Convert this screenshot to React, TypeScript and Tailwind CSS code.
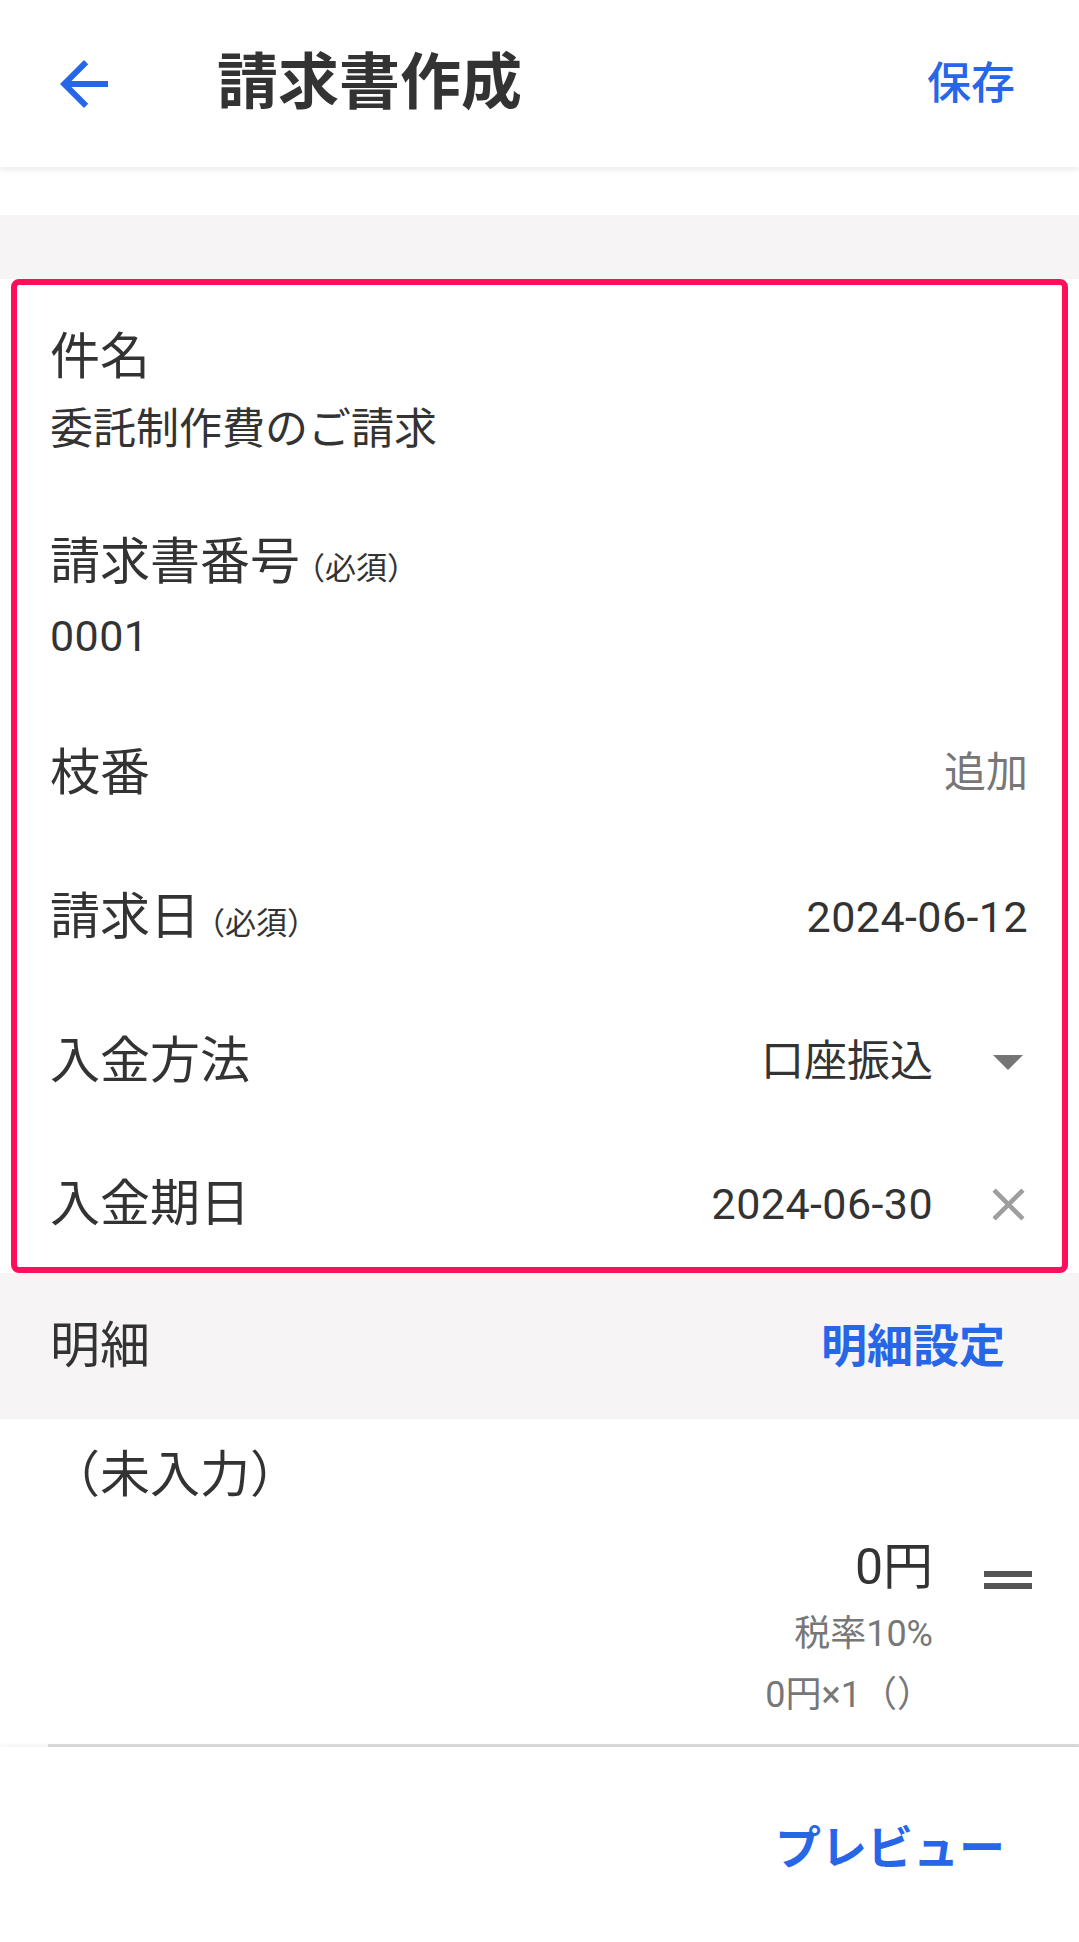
import type { ReactNode } from "react";

const font = { fontFamily: 'Roboto, "Noto Sans CJK JP", sans-serif' };

function ArrowBack() {
  return (
    <svg viewBox="0 0 24 24" className="h-[72px] w-[72px] fill-[#2866e8]">
      <path d="M20 11H7.83l5.59-5.59L12 4l-8 8 8 8 1.41-1.41L7.83 13H20v-2z" />
    </svg>
  );
}

function DropDown() {
  return (
    <svg viewBox="0 0 24 24" className="h-[72px] w-[72px] fill-[#757575]">
      <path d="M7 10l5 5 5-5z" />
    </svg>
  );
}

function Close() {
  return (
    <svg viewBox="0 0 24 24" className="h-[55px] w-[55px] fill-[#9e9e9e]">
      <path d="M19 6.41L17.59 5 12 10.59 6.41 5 5 6.41 10.59 12 5 17.59 6.41 19 12 13.41 17.59 19 19 17.59 13.41 12z" />
    </svg>
  );
}

function DragHandle() {
  return (
    <svg viewBox="0 0 24 24" className="h-[72px] w-[72px] fill-[#555555]">
      <path d="M20 9H4v2h16V9zM4 15h16v-2H4v2z" />
    </svg>
  );
}

function Label({ text, required }: { text: string; required?: boolean }) {
  return (
    <p className="flex h-[60px] items-baseline overflow-hidden text-[50px] leading-[60px] text-[#333333]">
      {text}
      {required && <span className="-ml-[6px] text-[31px] text-[#333333]">（必須）</span>}
    </p>
  );
}

function Row({ label, required, className, children }: { label: string; required?: boolean; className: string; children: ReactNode }) {
  return (
    <div className={`flex items-center justify-between pl-[33px] ${className}`}>
      <Label text={label} required={required} />
      <div className="flex h-[72px] items-center">{children}</div>
    </div>
  );
}

export default function App() {
  return (
    <main style={font} className="min-h-[1942px] w-full bg-white">
      <header className="relative z-10 flex h-[167px] items-center bg-white pl-[48px] pr-[64px] shadow-[0_3px_6px_rgba(0,0,0,0.08)]">
        <ArrowBack />
        <h1 className="ml-[97px] flex-1 text-[61px] font-bold leading-none text-[#333333]">請求書作成</h1>
        <button className="text-[44px] font-medium leading-none text-[#2866e8]">保存</button>
      </header>

      <div className="h-[48px] bg-white" />
      <div className="h-[64px] bg-[#f6f4f5]" />

      <div className="bg-white px-[11px]">
        <section className="h-[994px] overflow-hidden rounded-[8px] border-[6px] border-[#ff0f5b] bg-white">
          <div className="h-[205px] pl-[33px] pt-[42px]">
            <Label text="件名" />
            <p className="mt-[12px] h-[60px] overflow-hidden text-[43px] leading-[60px] text-[#333333]">委託制作費のご請求</p>
          </div>
          <div className="h-[210px] pl-[33px] pt-[42px]">
            <Label text="請求書番号" required />
            <p className="mt-[14px] h-[60px] overflow-hidden text-[43px] leading-[60px] tracking-[0.01em] text-[#333333]">0001</p>
          </div>
          <Row label="枝番" className="h-[145px] pr-[34px]">
            <span className="text-[42px] leading-[60px] text-[#777777]">追加</span>
          </Row>
          <Row label="請求日" required className="h-[144px] pr-[34px]">
            <span className="text-[43px] leading-[60px] tracking-[0.01em] text-[#333333]">2024-06-12</span>
          </Row>
          <Row label="入金方法" className="h-[144px] pr-[18px]">
            <span className="text-[43px] leading-[60px] text-[#333333]">口座振込</span>
            <span className="ml-[39px] flex w-[72px] justify-center">
              <DropDown />
            </span>
          </Row>
          <Row label="入金期日" className="h-[134px] pt-[8px] pr-[18px]">
            <span className="text-[43px] leading-[60px] tracking-[0.01em] text-[#333333]">2024-06-30</span>
            <span className="ml-[39px] flex w-[72px] justify-center">
              <Close />
            </span>
          </Row>
        </section>
      </div>

      <div className="flex h-[146px] items-center justify-between bg-[#f6f4f5] pl-[50px] pr-[74px]">
        <h2 className="h-[60px] text-[50px] leading-[60px] text-[#333333]">明細</h2>
        <button className="h-[60px] text-[46px] font-bold leading-[60px] text-[#2866e8]">明細設定</button>
      </div>

      <div className="h-[325px] overflow-hidden bg-white pt-[26px]">
        <p className="h-[60px] pl-[50px] text-[50px] leading-[60px] text-[#333333]">（未入力）</p>
        <div className="mt-[32px] flex items-start justify-end pr-[35px]">
          <div className="flex flex-col items-end">
            <span className="h-[60px] text-[50px] leading-[60px] text-[#333333]">0円</span>
            <span className="mt-[13px] h-[48px] text-[36px] leading-[48px] text-[#777777]">税率10%</span>
            <span className="mt-[13px] h-[48px] text-[36px] leading-[48px] text-[#777777]">0円×1（）</span>
          </div>
          <span className="ml-[39px] mt-[7px] flex w-[72px] justify-center">
            <DragHandle />
          </span>
        </div>
      </div>
      <div className="ml-[48px] h-[3px] bg-[#dedede]" />

      <footer className="relative flex h-[195px] justify-end bg-white pr-[74px] pt-[71px] shadow-[0_-2px_4px_rgba(0,0,0,0.05)]">
        <button className="h-[60px] text-[46px] font-bold leading-[60px] text-[#2866e8]">プレビュー</button>
      </footer>
    </main>
  );
}
